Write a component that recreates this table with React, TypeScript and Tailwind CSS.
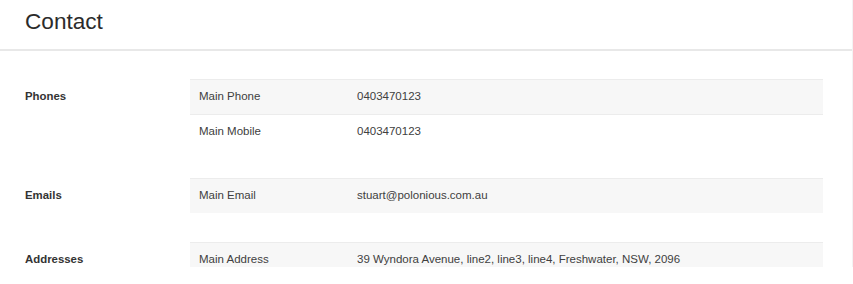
import React from "react";

type Row = { label: string; value: string };

const sections: { title: string; rows: Row[] }[] = [
  {
    title: "Phones",
    rows: [
      { label: "Main Phone", value: "0403470123" },
      { label: "Main Mobile", value: "0403470123" },
    ],
  },
  { title: "Emails", rows: [{ label: "Main Email", value: "stuart@polonious.com.au" }] },
  {
    title: "Addresses",
    rows: [{ label: "Main Address", value: "39 Wyndora Avenue, line2, line3, line4, Freshwater, NSW, 2096" }],
  },
];

export default function App() {
  return (
    <div
      className="w-[853px] h-[284px] bg-white text-[#404040] overflow-hidden"
      style={{ fontFamily: '"Liberation Sans", Arial, sans-serif' }}
    >
      <div className="h-[267px] border-r border-[#f3f3f3] overflow-hidden">
        <div className="h-[51px] border-b-2 border-[#e8e8e8] pl-[25px] pt-[6px]">
          <h1 className="text-[22.6px] leading-[32px] text-[#2b2b2b]">Contact</h1>
        </div>
        <div className="pt-[28px]">
          {sections.map((s) => (
            <div key={s.title} className="flex mb-[29px]">
              <div className="w-[190px] shrink-0 pl-[25px] pt-[8px] text-[11.4px] leading-[18px] font-bold text-[#333]">
                {s.title}
              </div>
              <div className="flex-1 mr-[29px]">
                {s.rows.map((r, i) => (
                  <div
                    key={r.label}
                    className={`flex border-t border-[#ececec] text-[11.5px] leading-[18px] ${
                      i % 2 === 0 ? "bg-[#f7f7f7]" : "bg-white"
                    }`}
                  >
                    <div className="w-[158px] shrink-0 px-[9px] pt-[7px] pb-[9px]">{r.label}</div>
                    <div className="flex-1 px-[9px] pt-[7px] pb-[9px]">{r.value}</div>
                  </div>
                ))}
              </div>
            </div>
          ))}
        </div>
      </div>
    </div>
  );
}
